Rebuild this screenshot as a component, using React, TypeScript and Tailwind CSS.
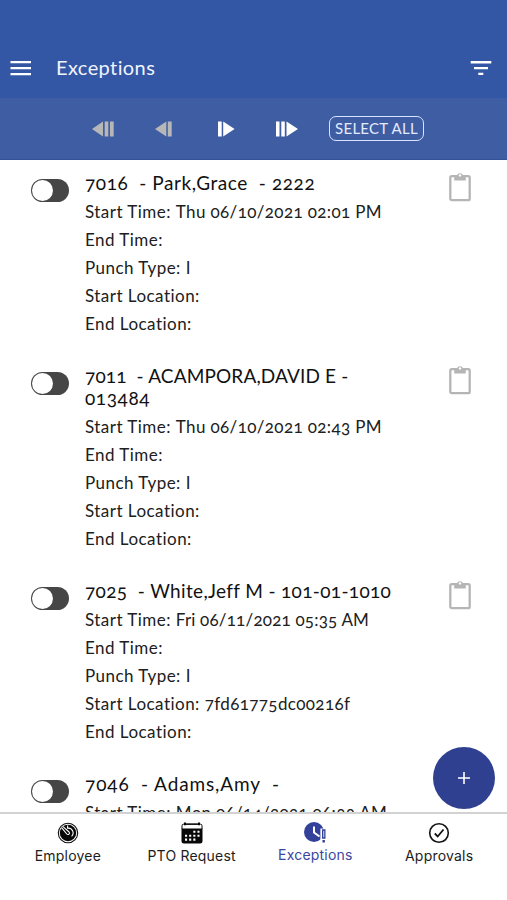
import type { ReactNode } from "react";

type Entry = {
  title: { text: string; spacing: string }[];
  start: string;
  startSpacing: string;
  location?: string;
};

const entries: Entry[] = [
  {
    title: [{ text: "7016  - Park,Grace  - 2222", spacing: "tracking-[0.58px]" }],
    start: "Thu 06/10/2021 02:01 PM",
    startSpacing: "tracking-[0.37px]",
  },
  {
    title: [
      { text: "7011  - ACAMPORA,DAVID E -", spacing: "tracking-[0.14px]" },
      { text: "013484", spacing: "tracking-[0.6px]" },
    ],
    start: "Thu 06/10/2021 02:43 PM",
    startSpacing: "tracking-[0.37px]",
  },
  {
    title: [{ text: "7025  - White,Jeff M - 101-01-1010", spacing: "tracking-[0.34px]" }],
    start: "Fri 06/11/2021 05:35 AM",
    startSpacing: "tracking-[0.2px]",
    location: "7fd61775dc00216f",
  },
  {
    title: [{ text: "7046  - Adams,Amy  -", spacing: "tracking-[0.88px]" }],
    start: "Mon 06/14/2021 06:33 AM",
    startSpacing: "tracking-[0.31px]",
  },
];

function Toggle() {
  return (
    <div className="mt-[7px] ml-[31px] flex h-[23px] w-[38px] shrink-0 rounded-full bg-[#464646] p-px">
      <div className="size-[21px] rounded-full bg-white" />
    </div>
  );
}

function Clipboard() {
  return (
    <svg width="22" height="30" viewBox="0 0 22 30" className="mr-[36px] shrink-0" fill="none">
      <rect x="1.3" y="4.2" width="19.4" height="24" rx="1.5" stroke="#b5b5b5" strokeWidth="2.3" />
      <path d="M5.2 3.6h2.7a3.2 3.2 0 0 1 6.2 0h2.7v4.8H5.2z" fill="#b5b5b5" />
      <circle cx="11" cy="3.4" r="1.2" fill="#fff" />
    </svg>
  );
}

function Row({ label, value = "", spacing = "tracking-[0.37px]" }: { label: string; value?: string; spacing?: string }) {
  return (
    <p className="h-7 whitespace-pre text-[17px] leading-7 tracking-[0.47px]">
      {label}: <span className={spacing}>{value}</span>
    </p>
  );
}

function Tab({ label, active, children }: { label: string; active?: boolean; children: ReactNode }) {
  return (
    <div className={`flex flex-1 flex-col items-center ${active ? "pt-[7px] text-[#3b479f]" : "pt-[8px] text-[#1c1c1c]"}`}>
      <svg width="24" height="22" viewBox="0 0 24 22" fill="none">
        {children}
      </svg>
      <span className="mt-[2px] text-[14px] leading-5 tracking-[0.2px]">{label}</span>
    </div>
  );
}

export default function App() {
  return (
    <div className="relative flex h-[900px] w-[507px] flex-col overflow-hidden bg-white font-['Lato',sans-serif] text-[#202020] [font-variant-numeric:oldstyle-nums]">
      <header className="flex h-[98px] shrink-0 items-end bg-[#3357a5] pb-[18px] pl-[10px] pr-[15px] text-white">
        <svg width="22" height="24" viewBox="0 0 22 24" fill="currentColor">
          <path d="M.5 5h20.5v2.2H.5zM.5 11h20.5v2.2H.5zM.5 17h20.5v2.2H.5z" />
        </svg>
        <h1 className="ml-6 mb-px text-[20px] leading-6 tracking-[0.4px] text-[#f0f4ff]">Exceptions</h1>
        <svg width="22" height="24" viewBox="0 0 22 24" fill="currentColor" className="ml-auto">
          <path d="M.7 5h20.6v2.4H.7zM4 11h14v2.2H4zM8.3 16.7h5v2.3h-5z" />
        </svg>
      </header>

      <div className="flex h-[62px] shrink-0 items-center border-b border-[#315399] bg-[#3e5da2] pl-[92px]">
        <svg width="22" height="16" viewBox="0 0 22 16" fill="#b7b7b7">
          <path d="M0 8 11 .5v15zM12.7.5h3.6v15h-3.6zM18 .5h3.7v15H18z" />
        </svg>
        <svg width="17" height="16" viewBox="0 0 17 16" fill="#b7b7b7" className="ml-[41px]">
          <path d="M0 8 11.3.5v15zM12.8.5h3.9v15h-3.9z" />
        </svg>
        <svg width="17" height="16" viewBox="0 0 17 16" fill="#fff" className="ml-[46px]">
          <path d="M0 .5h3.7v15H0zM5.2.5 16.6 8 5.2 15.5z" />
        </svg>
        <svg width="22" height="16" viewBox="0 0 22 16" fill="#fff" className="ml-[41px]">
          <path d="M0 .5h3.5v15H0zM5.3.5h3.5v15H5.3zM10.5.5 22 8 10.5 15.5z" />
        </svg>
        <button className="ml-[31px] flex h-[25px] w-[95px] items-center justify-center whitespace-nowrap rounded-[7px] border-[1.5px] border-[#d9e3ff] text-[15px] leading-none tracking-[0.25px] text-[#e4ebff]">
          SELECT ALL
        </button>
      </div>

      <main className="h-[653px] shrink-0 overflow-hidden pt-3">
        {entries.map((e) => (
          <section key={e.start} className="mb-[27px] flex items-start">
            <Toggle />
            <div className="ml-4 min-w-0 flex-1">
              <h2 className="mb-1 text-[19px] leading-[22px] text-[#111]">
                {e.title.map((t) => (
                  <span key={t.text} className={`block whitespace-pre ${t.spacing}`}>
                    {t.text}
                  </span>
                ))}
              </h2>
              <Row label="Start Time" value={e.start} spacing={e.startSpacing} />
              <Row label="End Time" />
              <Row label="Punch Type" value="I" />
              <Row label="Start Location" value={e.location} />
              <Row label="End Location" />
            </div>
            <Clipboard />
          </section>
        ))}
      </main>

      <button aria-label="Add" className="absolute left-[433px] top-[747px] flex size-[62px] items-center justify-center rounded-full bg-[#304091]">
        <svg width="12" height="12" viewBox="0 0 12 12" stroke="#fff" strokeWidth="1.6">
          <path d="M6 0v12M0 6h12" />
        </svg>
      </button>

      <nav className="-mt-px flex flex-1 border-t-2 border-[#d2d2d2] bg-white px-[6px] font-['Inter',sans-serif]">
        <Tab label="Employee">
          <circle cx="12" cy="11" r="9.7" stroke="#111" strokeWidth="1.1" />
          <circle cx="12" cy="11" r="8.2" fill="#080808" />
          <path d="M11.6 3.4V6.2A4.8 4.8 0 0 1 15.6 14.4" stroke="#fff" strokeWidth="1.1" />
          <path d="m5.8 5.8 5 6.2a1.5 1.5 0 0 0 2.3-2L7 4.6" stroke="#fff" strokeWidth="1.1" fill="#080808" />
        </Tab>
        <Tab label="PTO Request">
          <path d="M1.5 6.4h21V19a2.5 2.5 0 0 1-2.5 2.5H4A2.5 2.5 0 0 1 1.5 19z" fill="#080808" />
          <path d="M2 7V3.7A1.5 1.5 0 0 1 3.5 2.2h17A1.5 1.5 0 0 1 22 3.7V7" stroke="#080808" />
          <path d="M4 .6h2v2.6H4zM18 .6h2v2.6h-2zM5 1.6h14v1.2H5z" fill="#080808" />
          <path d="M13.3 9.8h6.2M5 13.7h14.5M5 17.6h10.4" stroke="#fff" strokeWidth="2.1" strokeDasharray="2.1 2.05" />
        </Tab>
        <Tab label="Exceptions" active>
          <circle cx="11" cy="11" r="10" fill="#34419b" />
          <path d="M11 5.5v6l5.5 4" stroke="#fff" strokeWidth="2" />
          <path d="M17.4 7.5h7v16h-7z" fill="#fff" />
          <path d="M19 8.2h3.5v9.6H19zM19.5 19h2.4v2.4h-2.4z" fill="#34419b" />
          <path d="M20.75 9.8v6.4" stroke="#fff" strokeWidth=".8" />
        </Tab>
        <Tab label="Approvals">
          <circle cx="12" cy="11" r="9.3" stroke="#111" strokeWidth="1.6" />
          <path d="m7.8 11.5 2.9 3L16.5 7.5" stroke="#111" strokeWidth="1.8" />
        </Tab>
      </nav>
    </div>
  );
}
